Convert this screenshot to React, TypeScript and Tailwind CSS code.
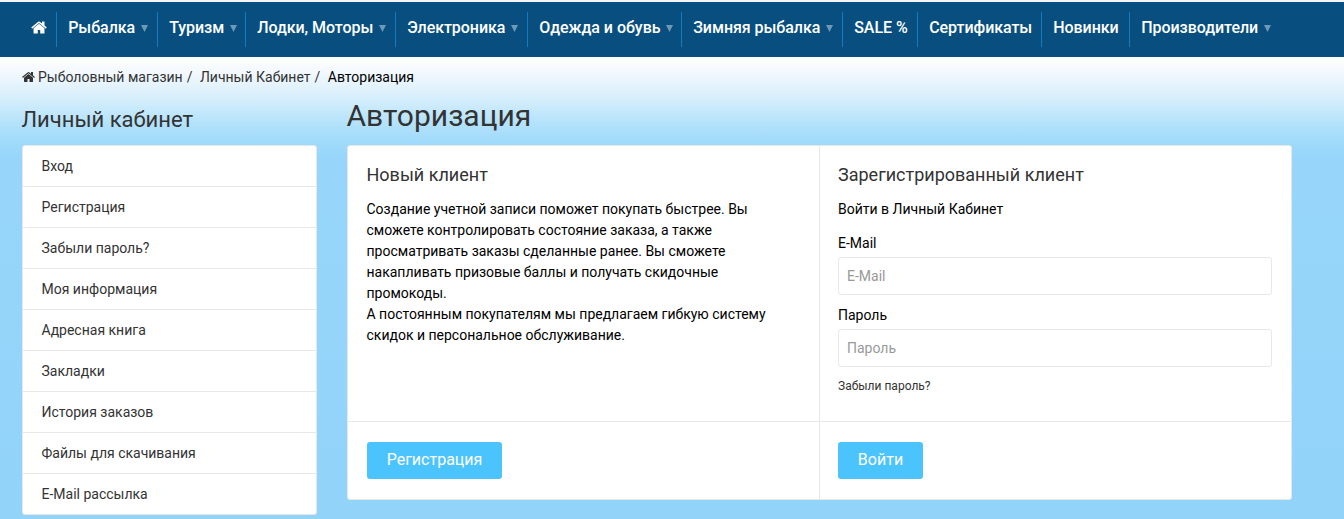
const NAV = [
  { label: 'Рыбалка', menu: true, box: 'w-[101px]' },
  { label: 'Туризм', menu: true, box: 'w-[88px]' },
  { label: 'Лодки, Моторы', menu: true, box: 'w-[150px]' },
  { label: 'Электроника', menu: true, box: 'w-[132px]' },
  { label: 'Одежда и обувь', menu: true, box: 'w-[154px]' },
  { label: 'Зимняя рыбалка', menu: true, box: 'w-[161px]' },
  { label: 'SALE %', menu: false, box: 'w-[75px]' },
  { label: 'Сертификаты', menu: false, box: 'w-[124px]' },
  { label: 'Новинки', menu: false, box: 'w-[88px]' },
  { label: 'Производители', menu: true, box: 'w-[160px] border-r-0' },
];

const SIDE = [
  'Вход',
  'Регистрация',
  'Забыли пароль?',
  'Моя информация',
  'Адресная книга',
  'Закладки',
  'История заказов',
  'Файлы для скачивания',
  'E-Mail рассылка',
];

function HomeIcon({ className }: { className: string }) {
  return (
    <svg viewBox="0 0 1664 1792" fill="currentColor" className={className} aria-hidden="true">
      <path d="M1408 992v480q0 26-19 45t-45 19h-384v-384h-256v384h-384q-26 0-45-19t-19-45v-480q0-1 .5-3t.5-3l575-474 575 474q1 2 1 6zm223-69l-62 74q-8 9-21 11h-3q-13 0-21-7l-692-577-692 577q-12 8-24 7-13-2-21-11l-62-74q-8-10-7-23.5t11-21.5l719-599q32-26 76-26t76 26l244 204v-195q0-14 9-23t23-9h192q14 0 23 9t9 23v408l219 182q10 8 11 21.5t-7 23.5z" />
    </svg>
  );
}

function Field({ label, type }: { label: string; type: string }) {
  return (
    <label className="block">
      <span className="block h-[21px]">{label}</span>
      <input
        type={type}
        placeholder={label}
        className="mt-[3px] block h-[38px] w-full rounded-[3px] border border-[#e8e8e8] bg-white px-2 placeholder:text-[#999]"
      />
    </label>
  );
}

export default function App() {
  return (
    <div className="flex h-[519px] flex-col overflow-hidden bg-[#f3f6f8] pt-[2px] font-['Roboto',sans-serif] text-sm leading-[21px] text-black">
      <nav className="flex h-[55px] shrink-0 bg-[#084f80] pt-[10px] pl-[22px] text-base font-medium text-white">
        <a className="flex h-[35px] w-[35px] items-center border-r border-[#127bc3] pb-1 pl-[9px]">
          <HomeIcon className="h-[17px] w-4" />
        </a>
        {NAV.map((item) => (
          <a
            key={item.label}
            className={`flex h-[35px] shrink-0 items-center whitespace-nowrap border-r border-[#127bc3] pb-[3px] pl-[11.2px] tracking-[-0.05px] ${item.box}`}
          >
            {item.label}
            {item.menu && (
              <svg viewBox="0 0 7 7" className="mt-px ml-[5.5px] h-[7px] w-[7px] fill-[#6e99b6]">
                <path d="M0 0h7L3.5 7z" />
              </svg>
            )}
          </a>
        ))}
      </nav>

      <div className="flex grow flex-col bg-[linear-gradient(180deg,#ffffff_0px,#f2f8fe_16px,#d5eefc_42px,#b4e2fb_66px,#9fdafb_86px,#97d6fa_100px,#92d3fa_462px)] px-[22px]">
        <div className="flex h-[41px] items-center whitespace-pre text-[#333]">
          <HomeIcon className="mb-[2px] h-[14px] w-[13px]" />
          <a className="ml-[3px]">Рыболовный магазин</a>
          <span className="ml-1">/</span>
          <a className="ml-[7.5px]">Личный Кабинет</a>
          <span className="ml-1">/</span>
          <span className="ml-[7.5px] text-black">Авторизация</span>
        </div>

        <div className="flex gap-[30px]">
          <aside className="w-[295px]">
            <h2 className="-ml-[0.5px] flex h-[47px] items-center pb-[5px] text-[22px] text-[#333]">Личный кабинет</h2>
            <ul className="rounded-[3px] border border-[#e8e8e8] bg-white text-[#333]">
              {SIDE.map((s) => (
                <li
                  key={s}
                  className="flex h-[41px] items-center border-b border-[#e8e8e8] pl-[18.5px] last:h-10 last:border-b-0"
                >
                  {s}
                </li>
              ))}
            </ul>
          </aside>

          <main className="w-[945px]">
            <h1 className="-ml-[0.5px] flex h-[47px] items-center pb-[13px] text-[30px] text-[#333]">Авторизация</h1>
            <div className="grid h-[355px] grid-cols-[472px_1fr] grid-rows-[276px_1fr] rounded-[3px] border border-[#e8e8e8] bg-white">
              <section className="border-r border-b border-[#e8e8e8] pt-[18px] pl-[18.5px]">
                <h3 className="text-lg leading-[22px] text-[#333]">Новый клиент</h3>
                <p className="mt-[13px] whitespace-nowrap">
                  Создание учетной записи поможет покупать быстрее. Вы
                  <br />
                  сможете контролировать состояние заказа, а также
                  <br />
                  просматривать заказы сделанные ранее. Вы сможете
                  <br />
                  накапливать призовые баллы и получать скидочные
                  <br />
                  промокоды.
                  <br />А постоянным покупателям мы предлагаем гибкую систему
                  <br />
                  скидок и персональное обслуживание.
                </p>
              </section>
              <section className="border-b border-[#e8e8e8] px-[18px] pt-[18px] pr-[19px]">
                <h3 className="text-lg leading-[22px] text-[#333]">Зарегистрированный клиент</h3>
                <p className="mt-[13px] mb-[13px]">Войти в Личный Кабинет</p>
                <div className="flex flex-col gap-[10px]">
                  <Field label="E-Mail" type="text" />
                  <Field label="Пароль" type="password" />
                </div>
                <a className="mt-[9px] block text-xs leading-5 text-[#333]">Забыли пароль?</a>
              </section>
              <div className="border-r border-[#e8e8e8] pt-5 pl-[19px]">
                <button className="h-[37px] w-[135px] rounded-[3px] bg-[#4bc4fd] pb-[2px] text-base text-white">
                  Регистрация
                </button>
              </div>
              <div className="pt-5 pl-[18px]">
                <button className="h-[37px] w-[85px] rounded-[3px] bg-[#4bc4fd] pb-[2px] text-base text-white">
                  Войти
                </button>
              </div>
            </div>
          </main>
        </div>
      </div>
    </div>
  );
}
